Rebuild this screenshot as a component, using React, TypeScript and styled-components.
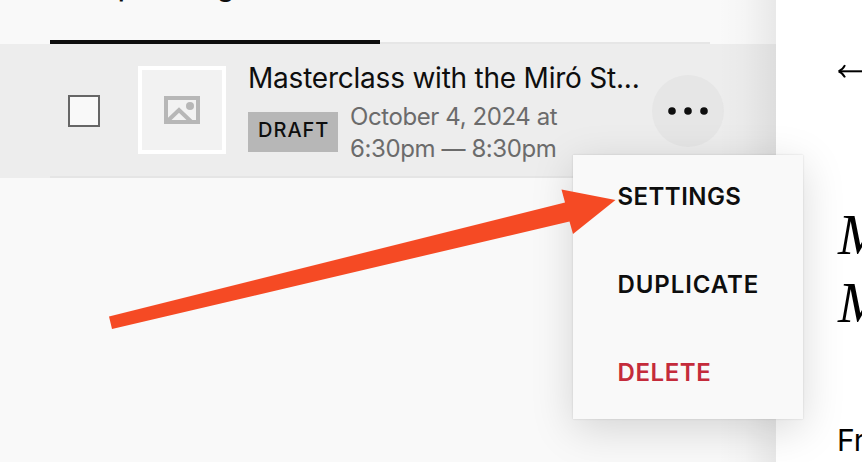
import React from 'react';
import styled, { createGlobalStyle } from 'styled-components';

const GlobalStyle = createGlobalStyle`
  *, *::before, *::after { box-sizing: border-box; }
  body {
    margin: 0;
    overflow: hidden;
    background: #fff;
    color: #0e0e0e;
    font-family: Inter, "Liberation Sans", sans-serif;
  }
`;

const Screen = styled.div`
  position: relative;
  display: flex;
  width: 862px;
  height: 462px;
  overflow: hidden;
  background: #fff;
`;

const Sidebar = styled.aside`
  position: relative;
  flex: 0 0 776px;
  background: #f9f9f9;
  &::after {
    content: '';
    position: absolute;
    inset: 0 0 0 auto;
    width: 58px;
    background: linear-gradient(to right, rgba(0, 0, 0, 0), rgba(0, 0, 0, 0.014) 45%, rgba(0, 0, 0, 0.065));
    pointer-events: none;
  }
`;

const Tabs = styled.nav`
  display: flex;
  height: 44px;
  margin: 0 66px 0 50px;
`;

const Tab = styled.div<{ $active?: boolean }>`
  flex: 1;
  height: 44px;
  padding-left: 47px;
  font-size: 28px;
  line-height: 34px;
  font-weight: 500;
  background: linear-gradient(${p => (p.$active ? '#0e0e0e, #0e0e0e' : '#e6e6e6, #e6e6e6')}) bottom / 100% ${p => (p.$active ? 4 : 2)}px no-repeat;
`;

const TabLabel = styled.span`
  display: block;
  margin-top: -31px;
`;

const EventRow = styled.article`
  display: flex;
  align-items: center;
  height: 134px;
  padding: 0 52px 0 68px;
  background: linear-gradient(#e5e5e5, #e5e5e5) 50px 100% / 660px 2px no-repeat, #ededed;
`;

const Checkbox = styled.span`
  width: 32px;
  height: 32px;
  border: 2px solid #666;
  background: #f9f9f9;
`;

const Thumb = styled.div`
  display: flex;
  align-items: center;
  justify-content: center;
  width: 88px;
  height: 88px;
  margin: 0 22px 2px 38px;
  border: 4px solid #fff;
  background: #f2f2f2;
`;

const Details = styled.div`
  width: 404px;
  height: 134px;
  padding-top: 17px;
`;

const Title = styled.h3`
  margin: 0;
  font-size: 28px;
  line-height: 34px;
  font-weight: 400;
  letter-spacing: -0.22px;
  white-space: nowrap;
`;

const Meta = styled.div`
  display: flex;
  align-items: flex-start;
  margin-top: 6px;
`;

const Badge = styled.span`
  width: 90px;
  height: 40px;
  padding-left: 10px;
  margin: 11px 12px 0 0;
  background: #b7b7b7;
  font-size: 20px;
  line-height: 37px;
  font-weight: 500;
  letter-spacing: 1px;
`;

const DateText = styled.p`
  margin: 0;
  color: #6b6b6b;
  font-size: 24px;
  line-height: 32px;
  white-space: nowrap;
`;

const DateLine = styled.span<{ $spacing: number }>`
  display: block;
  letter-spacing: ${p => p.$spacing}px;
`;

const MoreButton = styled.span`
  display: flex;
  flex: 0 0 72px;
  align-items: center;
  justify-content: center;
  height: 72px;
  border-radius: 50%;
  background: #e6e6e6;
`;

const Preview = styled.main`
  flex: 1;
  padding: 59px 0 0 61px;
  overflow: hidden;
  white-space: nowrap;
`;

const BackIcon = styled.svg`
  display: block;
`;

const Heading = styled.h1`
  margin: 118px 0 0 1px;
  color: #000;
  font: italic 400 57px/68px "Liberation Serif", serif;
`;

const DateLabel = styled.p`
  margin: 85px 0 0 0;
  color: #000;
  font-size: 30px;
  line-height: 36px;
`;

const Menu = styled.div`
  position: absolute;
  left: 573px;
  top: 155px;
  width: 230px;
  height: 264px;
  padding-left: 44.5px;
  background: #f9f9f9;
  box-shadow: 0 0 2px rgba(0, 0, 0, 0.14), 0 10px 40px rgba(0, 0, 0, 0.15);
`;

const MenuItem = styled.div<{ $danger?: boolean; $spacing: number }>`
  height: 88px;
  font-size: 24px;
  line-height: 84px;
  font-weight: 600;
  letter-spacing: ${p => p.$spacing}px;
  color: ${p => (p.$danger ? '#c42b3b' : '#0e0e0e')};
`;

const Pointer = styled.svg`
  position: absolute;
  inset: 0;
  pointer-events: none;
`;

export default function App() {
  return (
    <>
      <GlobalStyle />
      <Screen>
        <Sidebar>
          <Tabs>
            <Tab $active><TabLabel>Upcoming</TabLabel></Tab>
            <Tab />
          </Tabs>
          <EventRow>
            <Checkbox role="checkbox" aria-checked="false" />
            <Thumb>
              <svg width="36" height="28" viewBox="0 0 36 28" fill="none">
                <rect x="2" y="2" width="32" height="24" stroke="#b7b7b7" strokeWidth="4" />
                <path d="M3 25.5 15 14 27 25.5" stroke="#b7b7b7" strokeWidth="4" />
                <circle cx="26" cy="10" r="4" fill="#b7b7b7" />
              </svg>
            </Thumb>
            <Details>
              <Title>Masterclass with the Miró St...</Title>
              <Meta>
                <Badge>DRAFT</Badge>
                <DateText>
                  <DateLine $spacing={-0.4}>October 4, 2024 at</DateLine>
                  <DateLine $spacing={-0.4}>6:30pm — 8:30pm</DateLine>
                </DateText>
              </Meta>
            </Details>
            <MoreButton role="button">
              <svg width="40" height="8" viewBox="0 0 40 8" fill="#0e0e0e">
                <circle cx="4" cy="4" r="3.8" />
                <circle cx="20" cy="4" r="3.8" />
                <circle cx="36" cy="4" r="3.8" />
              </svg>
            </MoreButton>
          </EventRow>
        </Sidebar>
        <Preview>
          <BackIcon width="34" height="24" viewBox="0 0 34 24" fill="none">
            <path d="M3 12.3H34" stroke="#000" strokeWidth="2" />
            <path d="M1.5 12.3Q6 10.5 8 6.2M1.5 12.3Q6 14 8 18.4" stroke="#000" strokeWidth="1.9" />
          </BackIcon>
          <Heading>Masterclass<br />Miró Studio</Heading>
          <DateLabel>Friday</DateLabel>
        </Preview>
        <Menu role="menu">
          <MenuItem role="menuitem" $spacing={0.45}>SETTINGS</MenuItem>
          <MenuItem role="menuitem" $spacing={0.9}>DUPLICATE</MenuItem>
          <MenuItem role="menuitem" $danger $spacing={0.6}>DELETE</MenuItem>
        </Menu>
        <Pointer width="862" height="462" viewBox="0 0 862 462">
          <path d="M109 316.5 565 202.5 561.5 189.5 615.5 200 573 234 569.5 221.5 112 329Z" fill="#f54a24" />
        </Pointer>
      </Screen>
    </>
  );
}
